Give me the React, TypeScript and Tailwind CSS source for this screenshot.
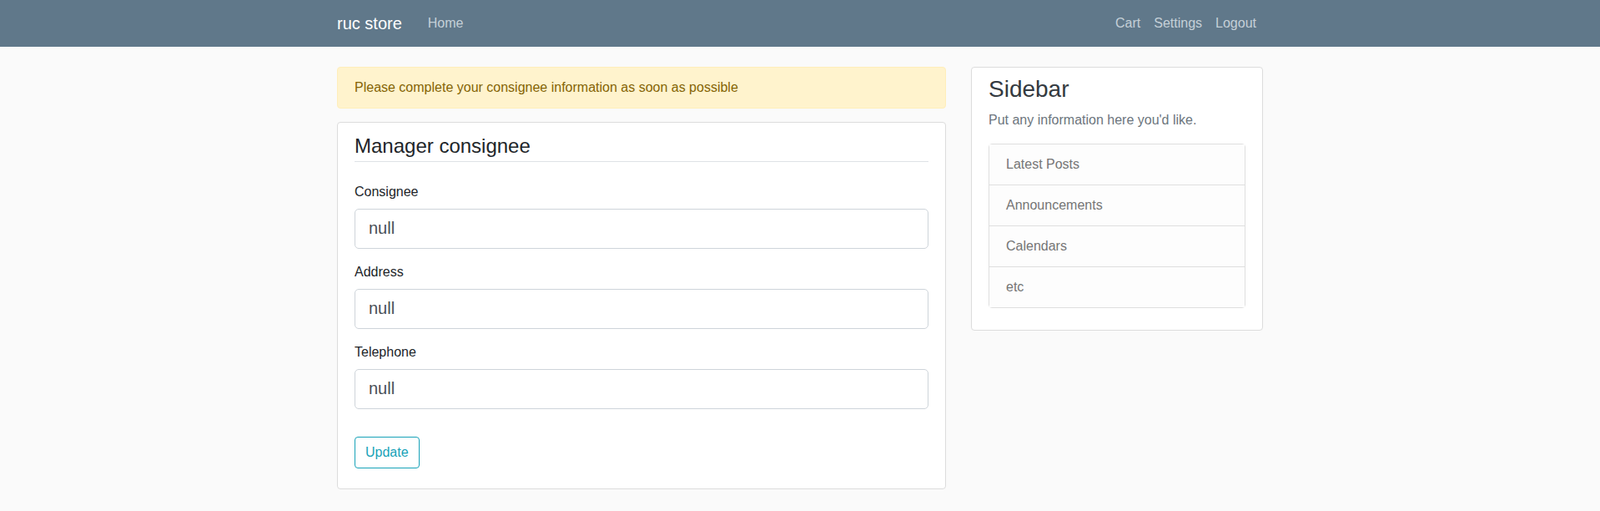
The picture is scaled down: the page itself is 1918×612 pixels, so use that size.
const fields = ["Consignee", "Address", "Telephone"]
const links = ["Latest Posts", "Announcements", "Calendars", "etc"]

function Navbar() {
  return (
    <nav className="bg-[#60788a] h-[56px]">
      <div className="w-[1140px] mx-auto px-[15px] h-full flex items-center">
        <span className="text-white text-[20px] leading-[30px] mr-[23px]">ruc store</span>
        <a className="px-2 text-[16px] leading-6 text-[#c5d0d8]">Home</a>
        <div className="ml-auto flex">
          {["Cart", "Settings", "Logout"].map((l) => (
            <a key={l} className="px-2 text-[16px] leading-6 text-[#c5d0d8]">
              {l}
            </a>
          ))}
        </div>
      </div>
    </nav>
  )
}

function ConsigneeForm() {
  return (
    <div className="bg-white border border-[#dcdcdc] rounded px-5 pt-[14px] pb-6">
      <h4 className="text-[24px] leading-[1.2] text-[#212529] pb-[3px] border-b border-[#dee2e6]">
        Manager consignee
      </h4>
      <div className="mt-6">
        {fields.map((f) => (
          <div key={f} className="mb-4">
            <label className="block text-[16px] leading-6 text-[#212529] mb-2">{f}</label>
            <input
              defaultValue="null"
              className="block w-full h-[48px] px-4 text-[20px] leading-[30px] text-[#495057] border border-[#ced4da] rounded-[5px] outline-none"
            />
          </div>
        ))}
        <button className="mt-[17px] px-3 h-[38px] text-[16px] leading-6 text-[#17a2b8] border border-[#17a2b8] rounded">
          Update
        </button>
      </div>
    </div>
  )
}

function Sidebar() {
  return (
    <div className="bg-white border border-[#dcdcdc] rounded px-5 pt-[9px] pb-[26px]">
      <h3 className="text-[28px] leading-[1.2] text-[#343a40] mb-2">Sidebar</h3>
      <p className="text-[16px] leading-6 text-[#6c757d] mb-4">Put any information here you'd like.</p>
      <ul className="border border-[#dfdfdf] rounded">
        {links.map((l, i) => (
          <li
            key={l}
            className={[
              "px-5 py-3 text-[16px] leading-6 text-[#757575] bg-[#fdfdfd]",
              i > 0 && "border-t border-[#dfdfdf]",
            ]
              .filter(Boolean)
              .join(" ")}
          >
            {l}
          </li>
        ))}
      </ul>
    </div>
  )
}

export default function App() {
  return (
    <div className="min-h-[612px] bg-[#fafafa] font-['Liberation_Sans',Arial,sans-serif]">
      <Navbar />
      <div className="w-[1140px] mx-auto flex mt-6">
        <div className="w-[760px] px-[15px]">
          <div className="bg-[#fff3cd] border border-[#ffeeba] rounded px-5 py-3 text-[16px] leading-6 text-[#856404] mb-4">
            Please complete your consignee information as soon as possible
          </div>
          <ConsigneeForm />
        </div>
        <div className="w-[380px] px-[15px]">
          <Sidebar />
        </div>
      </div>
    </div>
  )
}
